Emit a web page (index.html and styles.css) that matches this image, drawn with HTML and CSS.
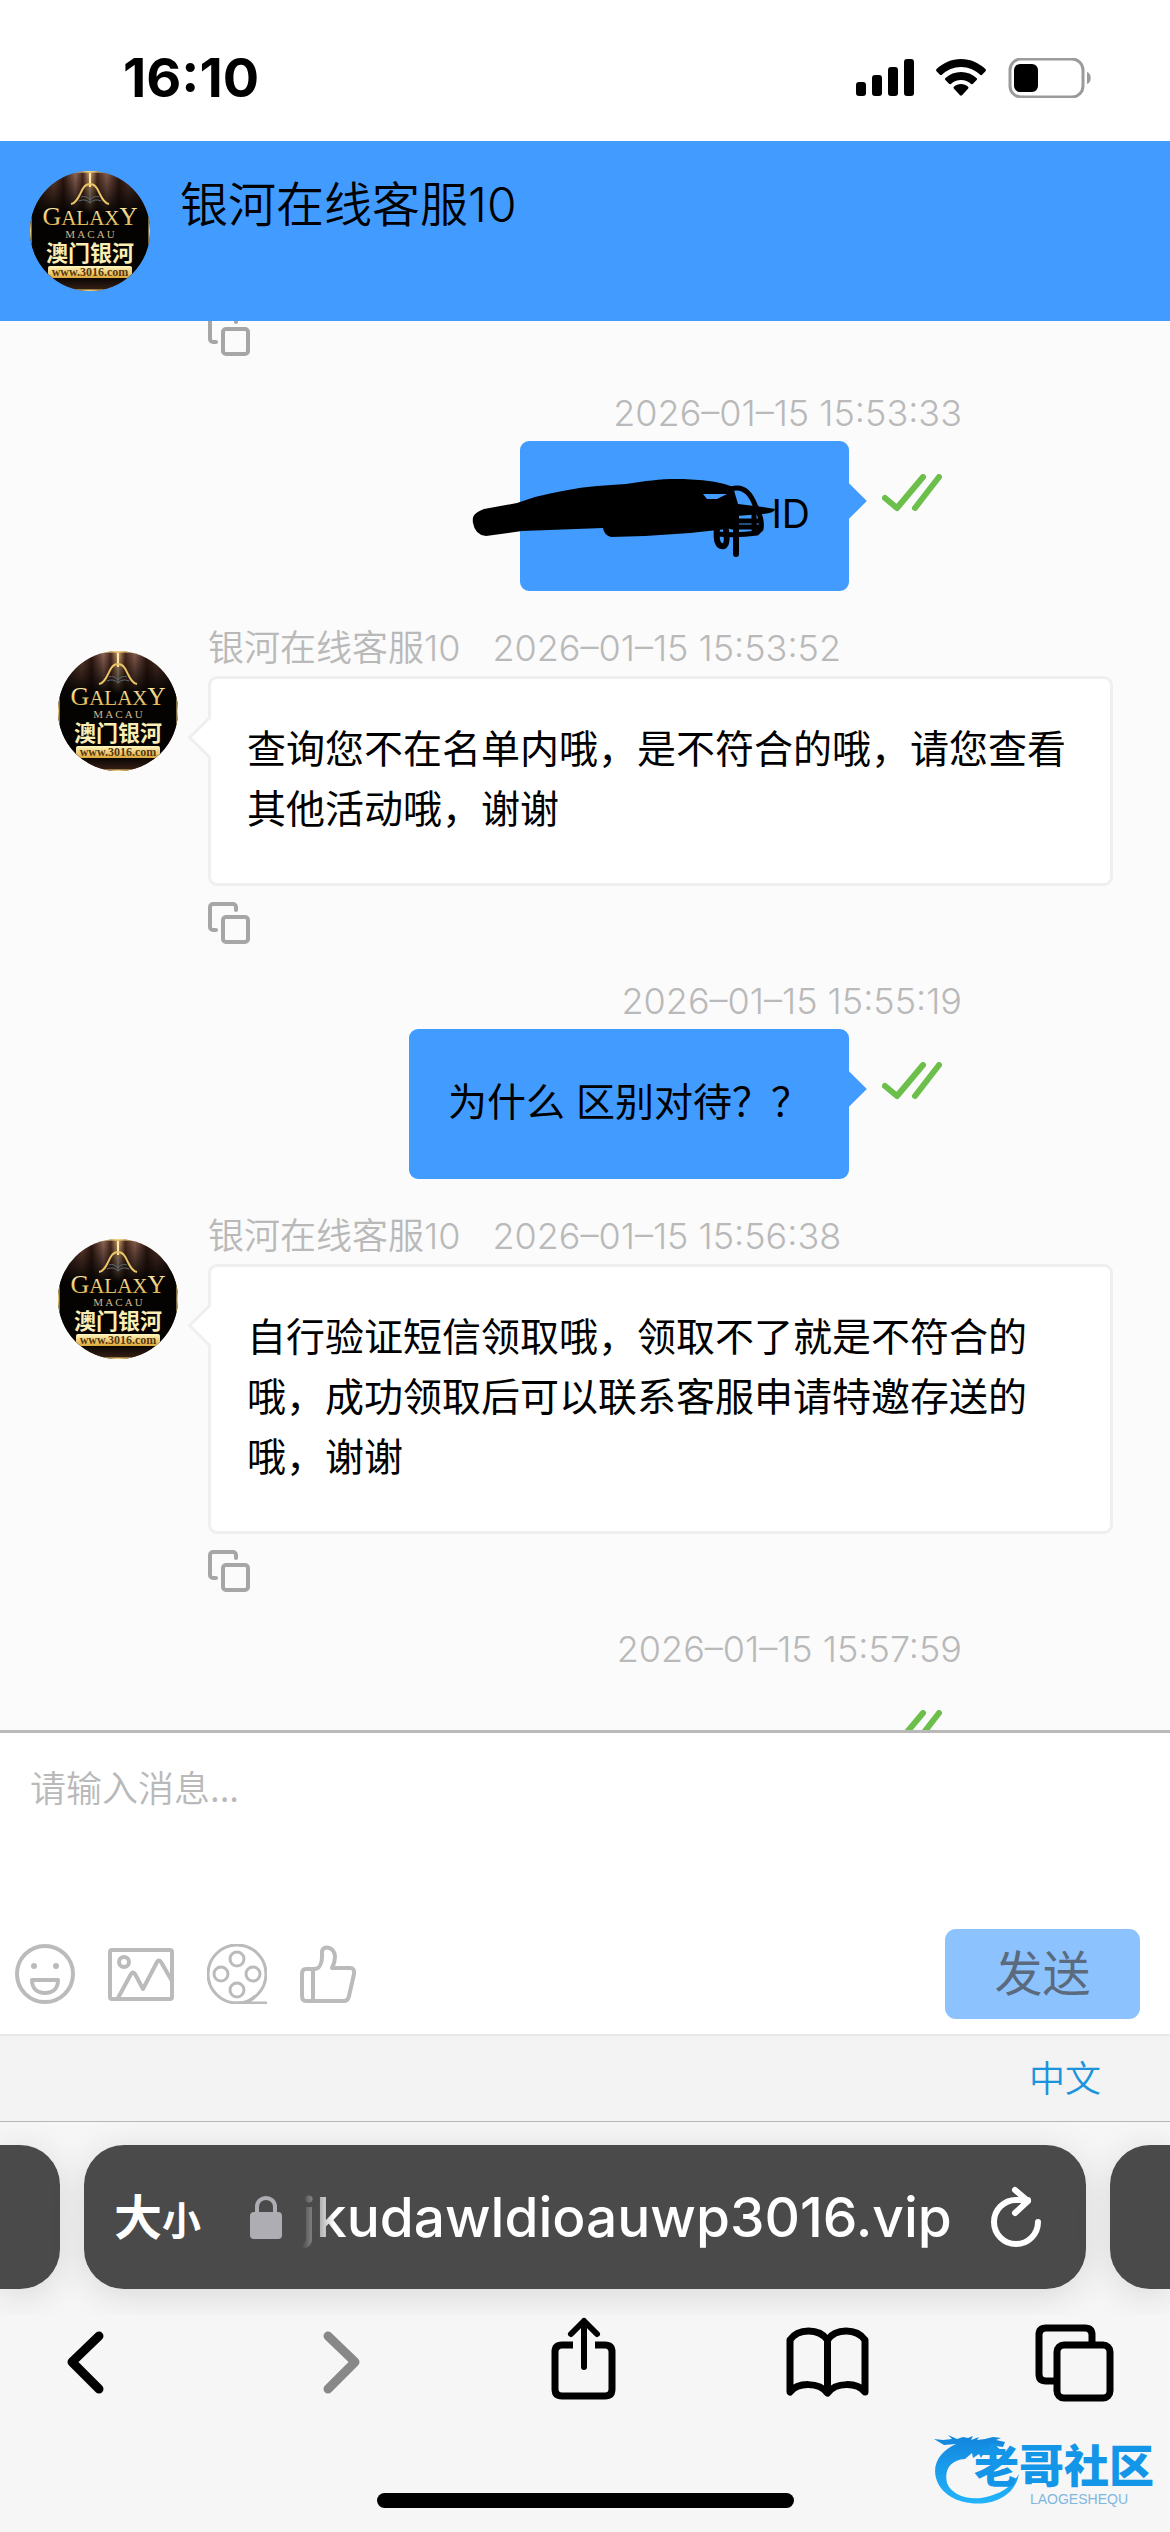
FILE: index.html
```html
<!DOCTYPE html>
<html lang="zh-CN">
<head>
  <meta charset="UTF-8" />
  <meta name="viewport" content="width=device-width, initial-scale=1.0" />
  <title>银河在线客服10</title>
  <link rel="stylesheet" href="styles.css">
</head>
<body>

<!-- Shared shapes -->
<svg class="defs" aria-hidden="true">
  <defs>
    <linearGradient id="curtain" x1="0" x2="1" y1="0" y2="0">
      <stop offset="0" stop-color="#1a0b06" />
      <stop offset="0.2" stop-color="#6b4434" />
      <stop offset="0.28" stop-color="#2f1710" />
      <stop offset="0.38" stop-color="#94695a" />
      <stop offset="0.44" stop-color="#4a281c" />
      <stop offset="0.5" stop-color="#d8a878" />
      <stop offset="0.56" stop-color="#4a281c" />
      <stop offset="0.64" stop-color="#8a6050" />
      <stop offset="0.74" stop-color="#2f1710" />
      <stop offset="0.82" stop-color="#55342a" />
      <stop offset="1" stop-color="#1a0b06" />
    </linearGradient>
    <linearGradient id="shade" x1="0" x2="0" y1="0" y2="1">
      <stop offset="0" stop-color="#050302" stop-opacity="0" />
      <stop offset="0.36" stop-color="#050302" />
      <stop offset="0.88" stop-color="#050302" />
      <stop offset="1" stop-color="#3a2216" />
    </linearGradient>
    <linearGradient id="gold" x1="0" x2="0" y1="0" y2="1">
      <stop offset="0" stop-color="#fff6c0" />
      <stop offset="1" stop-color="#dca93c" />
    </linearGradient>
    <clipPath id="round"><circle cx="60" cy="60" r="60" /></clipPath>
    <symbol id="galaxy" viewBox="0 0 120 120">
      <g clip-path="url(#round)">
        <rect width="120" height="120" fill="url(#curtain)" />
        <rect width="120" height="120" fill="url(#shade)" />
        <path d="M0 40v40M120 40v40M40 0h40M40 120h40" stroke="#f3d57c" stroke-width="3" />
        <path d="M60 2v14" stroke="#ffe9a0" stroke-width="2" />
        <path d="M41 33c10-2 9-20 19-20s9 18 19 20" fill="none" stroke="#e9c566" stroke-width="2" />
        <path d="M49 30q6-3 11 2q5-5 11-2M51 26q5-2 9 3q4-5 9-3M60 32V18" fill="none" stroke="#5b6a73" stroke-width="1" />
        <text class="logo-big" x="60" y="54" text-anchor="middle"><tspan font-size="26">G</tspan><tspan font-size="21">ALAX</tspan><tspan font-size="25">Y</tspan></text>
        <text class="logo-mid" x="60" y="67" text-anchor="middle">M A C A U</text>
        <text class="logo-cn" x="60" y="90" text-anchor="middle">澳门银河</text>
        <rect x="18" y="95" width="84" height="12" rx="2" fill="url(#gold)" />
        <text class="logo-url" x="60" y="105" text-anchor="middle">www.3016.com</text>
      </g>
    </symbol>
    <symbol id="copy" viewBox="0 0 42 42">
      <path d="M8 28H5a3 3 0 0 1-3-3V5a3 3 0 0 1 3-3h20a3 3 0 0 1 3 3v3" />
      <rect x="15" y="15" width="25" height="25" rx="3" />
    </symbol>
    <symbol id="ticks" viewBox="0 0 60 40">
      <path d="M3 24l12 10L41 3M33 34L57 3" />
    </symbol>
  </defs>
</svg>

<div class="status-bar">
  <span class="clock">16:10</span>
  <div class="status-icons">
    <svg width="58" height="40" viewBox="0 0 58 40">
      <rect x="0" y="24" width="10" height="14" rx="3" />
      <rect x="16" y="17" width="10" height="21" rx="3" />
      <rect x="32" y="9" width="10" height="29" rx="3" />
      <rect x="48" y="1" width="10" height="37" rx="3" />
    </svg>
    <svg width="50" height="40" viewBox="0 0 50 40">
      <path d="M25 1C15.500 1 7 5 .6 11c-.7.6-.7 1.500-.1 2.200l3.400 3.500c.6.600 1.400.600 2 .100C11 12 17.700 9 25 9s14 3 19.100 7.800c.6.500 1.400.500 2-.100l3.400-3.500c.6-.700.6-1.600-.1-2.200C43 5 34.500 1 25 1z" />
      <path d="M25 14c-6 0-11.400 2.300-15.500 6-.700.600-.700 1.500-.100 2.100l3.600 3.700c.5.500 1.300.600 1.900.100C17.600 23.500 21.100 22 25 22s7.400 1.500 10.100 3.900c.6.500 1.400.400 1.900-.100l3.600-3.700c.6-.600.6-1.500-.1-2.100C36.400 16.300 31 14 25 14z" />
      <path d="M25 26c-2.700 0-5.100 1-6.900 2.600-.7.600-.7 1.500-.1 2.200l6 6.400c.6.600 1.400.600 2 0l6-6.400c.6-.7.6-1.600-.1-2.200C30.100 27 27.700 26 25 26z" />
    </svg>
    <svg width="84" height="40" viewBox="0 0 84 40">
      <rect x="2" y="1" width="73" height="38" rx="11" fill="none" stroke="#9b9b9b" stroke-width="3" />
      <rect x="6" y="6" width="24" height="28" rx="6" />
      <path d="M79 14c5 1 5 11 0 12z" fill="#9b9b9b" />
    </svg>
  </div>
</div>

<header class="chat-header">
  <svg class="avatar"><use href="#galaxy" /></svg>
  <h1>银河在线客服10</h1>
</header>

<main class="chat">
  <div class="messages">
    <div class="msg">
      <div class="side"></div>
      <div class="body">
        <button class="copy" aria-label="复制"><svg><use href="#copy" /></svg></button>
      </div>
    </div>

    <div class="msg mine">
      <div class="meta">2026–01–15 15:53:33</div>
      <div class="line">
        <div class="bubble">
          <span class="hidden-word"></span>ID
          <svg class="scribble" viewBox="0 -4 310 84">
            <path d="M3 43C2 36 4 33 14 29L47 23L65 17C85 12 105 8 127 6L156 4C175 1 190-1 206-1C225-1 250 1 263 7L268 24L293 27L305 29Q305 33 293 34L266 36V48L220 53L175 56L141 57Q134 55 133 48L52 51L16 56Q5 55 3 43z" />
            <path d="M261 9q16-5 24 16q8 14 6 24l-4 4q-20 3-40 1M262 41h28M262 47h26M284 30v20" class="pen" />
            <path d="M266 32v42M247 48q-2 20 7 18q4-2 2-16" class="pen thick" />
            <path d="M233 14h24l-10 5h-10z" fill="#429cff" />
          </svg>
        </div>
        <svg class="ticks"><use href="#ticks" /></svg>
      </div>
    </div>

    <div class="msg">
      <div class="side"><svg class="avatar"><use href="#galaxy" /></svg></div>
      <div class="body">
        <div class="meta"><span>银河在线客服10</span><span>2026–01–15 15:53:52</span></div>
        <div class="bubble">查询您不在名单内哦，是不符合的哦，请您查看其他活动哦，谢谢</div>
        <button class="copy" aria-label="复制"><svg><use href="#copy" /></svg></button>
      </div>
    </div>

    <div class="msg mine">
      <div class="meta">2026–01–15 15:55:19</div>
      <div class="line">
        <div class="bubble">为什么 区别对待？？</div>
        <svg class="ticks"><use href="#ticks" /></svg>
      </div>
    </div>

    <div class="msg">
      <div class="side"><svg class="avatar"><use href="#galaxy" /></svg></div>
      <div class="body">
        <div class="meta"><span>银河在线客服10</span><span>2026–01–15 15:56:38</span></div>
        <div class="bubble">自行验证短信领取哦，领取不了就是不符合的哦，成功领取后可以联系客服申请特邀存送的哦，谢谢</div>
        <button class="copy" aria-label="复制"><svg><use href="#copy" /></svg></button>
      </div>
    </div>

    <div class="msg mine">
      <div class="meta">2026–01–15 15:57:59</div>
      <div class="line">
        <svg class="ticks"><use href="#ticks" /></svg>
      </div>
    </div>
  </div>
</main>

<form class="composer">
  <textarea aria-label="消息" placeholder="请输入消息..."></textarea>
  <div class="tools">
    <button type="button" aria-label="表情">
      <svg width="60" height="60" viewBox="0 0 60 60">
        <circle cx="30" cy="30" r="28" />
        <circle cx="19" cy="22" r="3" class="dot" /><circle cx="41" cy="22" r="3" class="dot" />
        <path d="M17 36h26c0 8-5 13-13 13s-13-5-13-13z" />
      </svg>
    </button>
    <button type="button" aria-label="图片">
      <svg width="66" height="60" viewBox="0 0 66 60">
        <rect x="2" y="6" width="62" height="49" rx="2" />
        <circle cx="16" cy="18" r="5" />
        <path d="M10 54l13-24q2-3 4 0l8 15L49 18q2-3 4 0l11 19" />
      </svg>
    </button>
    <button type="button" aria-label="视频">
      <svg class="thin" width="60" height="60" viewBox="0 0 60 60">
        <circle cx="30" cy="30" r="29" />
        <circle cx="30" cy="15" r="7" /><circle cx="14" cy="30" r="7" />
        <circle cx="46" cy="30" r="7" /><circle cx="30" cy="46" r="7" />
        <path d="M30 59h30M34 59q9-1 14-7" />
      </svg>
    </button>
    <button type="button" aria-label="点赞">
      <svg width="57" height="60" viewBox="0 0 57 60">
        <path d="M6 25h8c5 0 8-5 8-12V8c0-7 13-6 13 5 0 5-1 7-3 11h18q5 0 4 6l-5 22q-1 5-5 5H6q-4 0-4-5V30q0-5 4-5zM13 25v32" />
      </svg>
    </button>
    <button class="send" type="submit" disabled>发送</button>
  </div>
</form>

<div class="lang-bar"><a href="#">中文</a></div>

<footer class="browser">
  <div class="tabs">
    <span class="tab prev"></span>
    <div class="tab current">
      <button class="text-size" aria-label="大小">大<small>小</small></button>
      <svg class="lock" width="32" height="46" viewBox="0 0 32 46">
        <path d="M7 20v-7c0-12 18-12 18 0v7" fill="none" stroke="#aeadb3" stroke-width="4" />
        <rect y="18" width="32" height="27" rx="4" fill="#aeadb3" />
      </svg>
      <span class="url">jkudawldioauwp3016.vip</span>
      <button class="reload" aria-label="刷新">
        <svg width="52" height="62" viewBox="0 0 52 62">
          <path d="M48 36a22 22 0 1 1-22-22h12M25 4l13 11L25 27" />
        </svg>
      </button>
    </div>
    <span class="tab next"></span>
  </div>

  <nav class="nav">
    <button aria-label="后退"><svg viewBox="0 0 84 90"><path d="M56 21L29 47l27 27" stroke-width="9" /></svg></button>
    <button aria-label="前进" disabled><svg viewBox="0 0 84 90"><path d="M38 21l27 26-27 27" stroke-width="9" /></svg></button>
    <button aria-label="分享"><svg viewBox="0 0 84 90"><path d="M35 30H24q-7 0-7 7v37q0 7 7 7h43q7 0 7-7V37q0-7-7-7H57" stroke-linecap="butt" /><path d="M46 6v46M33 19L46 6l13 13" stroke-width="6" /></svg></button>
    <button aria-label="书签"><svg viewBox="0 0 84 90"><path d="M5 77V25c8-12 29-12 37.500 0c8-12 29-12 37.500 0v52c-8-10-29-10-37.500 1C34 67 13 67 5 77zM42.500 25v52" /></svg></button>
    <button aria-label="标签页"><svg viewBox="0 0 84 90"><path d="M24 66H14q-7 0-7-7V20q0-7 7-7h39q7 0 7 7v10" stroke-linecap="butt" /><rect x="25" y="30" width="53" height="53" rx="7" /></svg></button>
  </nav>

  <div class="home-bar"></div>

  <div class="watermark">
    <svg width="92" height="70" viewBox="0 0 92 70">
      <defs>
        <linearGradient id="dragon" x1="0" x2="0" y1="0" y2="1">
          <stop offset="0" stop-color="#1285dc" />
          <stop offset="1" stop-color="#22b4fb" />
        </linearGradient>
      </defs>
      <path fill="url(#dragon)" d="M0 5l9 1 9-1-4-4 9 4 6-2 5 1 5-2-2 4 8-3-2 3 8-1 8-2 8 1-5 2 9 2-2 5-7-1 6 5-10-1-8 3-3 5-2-4-6 4-1-5-7 6C16 26 10 36 13 49c5 13 24 19 43 13 15-4 23-12 29-22-3 15-14 26-33 29C28 72 7 62 2 44-2 29 7 17 22 10L10 11z" />
    </svg>
    <div class="mark-text"><b>老哥社区</b><small>LAOGESHEQU</small></div>
  </div>
</footer>

</body>
</html>
```

FILE: styles.css
```css
* {
  box-sizing: border-box;
}

body {
  margin: 0;
  height: 100vh;
  display: flex;
  flex-direction: column;
  overflow: hidden;
  font-family: Inter, "Noto Sans CJK SC", sans-serif;
  font-size: 39px;
  line-height: 60px;
  color: #000;
  background: #fff;
}

button {
  padding: 0;
  border: 0;
  background: none;
  font: inherit;
  color: inherit;
  cursor: pointer;
}

svg {
  display: block;
  flex: none;
}

.defs {
  position: absolute;
  width: 0;
  height: 0;
}

/* Status bar */
.status-bar {
  flex: none;
  display: flex;
  justify-content: space-between;
  align-items: center;
  padding: 48px 78px 33px 123px;
}

.clock {
  font-size: 54px;
  font-weight: 700;
}

.status-icons {
  display: flex;
  gap: 22px;
}

/* Header */
.chat-header {
  flex: none;
  display: flex;
  gap: 30px;
  padding: 30px;
  background: #429cff;
}

.chat-header h1 {
  margin: 0;
  font-size: 48px;
  font-weight: 350;
  line-height: 68px;
}

.avatar {
  width: 120px;
  height: 120px;
}

.logo-big {
  font-family: "Liberation Serif", serif;
  fill: url(#gold);
}

.logo-mid {
  font-family: "Liberation Serif", serif;
  font-size: 11px;
  fill: #cdb88a;
}

.logo-cn {
  font-family: "Noto Sans CJK SC", sans-serif;
  font-size: 22px;
  font-weight: 700;
  fill: #fbeeb4;
}

.logo-url {
  font-family: "Liberation Serif", serif;
  font-size: 12px;
  font-weight: 700;
  fill: #5a3608;
}

/* Messages */
.chat {
  flex: 1;
  min-height: 0;
  overflow: hidden;
  background: #fbfbfb;
}

.messages {
  display: flex;
  flex-direction: column;
  gap: 31px;
  margin-top: -23px;
}

.msg {
  display: flex;
  gap: 30px;
  padding: 0 57px 0 58px;
}

.side {
  width: 120px;
  padding-top: 29px;
}

.body {
  flex: 1;
}

.meta {
  display: flex;
  gap: 32px;
  padding-bottom: 2px;
  font-size: 36px;
  font-weight: 350;
  line-height: 52px;
  color: #b9b9b9;
}

.bubble {
  position: relative;
  padding: 40px 36px 44px;
  background: #fff;
  border: 3px solid #efefef;
  border-radius: 9px;
}

.bubble::before {
  content: "";
  position: absolute;
  top: 43px;
  left: -17px;
  width: 28px;
  height: 28px;
  background: #fff;
  border: solid #efefef;
  border-width: 0 0 3px 3px;
  transform: rotate(45deg);
}

.copy {
  display: block;
  margin-top: 16px;
}

.copy svg {
  width: 42px;
  height: 42px;
  fill: none;
  stroke: #a6a6a6;
  stroke-width: 4;
  stroke-linecap: round;
}

.mine {
  flex-direction: column;
  align-items: flex-end;
  gap: 0;
  padding-right: 208px;
}

.line {
  display: flex;
  align-items: flex-start;
  gap: 33px;
  padding-right: 20px;
}

.mine .bubble {
  background: #429cff;
  border-color: #429cff;
}

.mine .bubble::before {
  left: auto;
  right: -15px;
  background: #429cff;
  border: 0;
}

.ticks {
  width: 60px;
  height: 40px;
  margin-top: 33px;
  fill: none;
  stroke: #6cbf4b;
  stroke-width: 6;
  stroke-linecap: round;
  stroke-linejoin: round;
}

.hidden-word {
  display: inline-block;
  width: 212px;
}

.scribble {
  position: absolute;
  left: -53px;
  top: 32px;
  width: 310px;
  height: 84px;
}

.pen {
  fill: none;
  stroke: #000;
  stroke-width: 5;
  stroke-linecap: round;
}

.thick {
  stroke-width: 6;
}

/* Composer */
.composer {
  flex: none;
  margin: 0;
  border-top: 3px solid #b9b9b9;
  border-bottom: 2px solid #e8e8e8;
}

.composer textarea {
  display: block;
  width: 100%;
  height: 196px;
  padding: 26px 30px;
  border: 0;
  outline: 0;
  resize: none;
  background: none;
  font: 350 36px/54px "Noto Sans CJK SC", sans-serif;
}

.composer textarea::placeholder {
  color: #b9b9b9;
}

.tools {
  display: flex;
  align-items: center;
  gap: 33px;
  padding: 0 30px 15px 15px;
}

.tools svg {
  fill: none;
  stroke: #bbb;
  stroke-width: 4;
  stroke-linejoin: round;
}

.tools .thin {
  stroke-width: 3;
}

.tools .dot {
  fill: #bbb;
  stroke: none;
}

.send {
  width: 195px;
  height: 90px;
  margin-left: auto;
  border-radius: 11px;
  background: #8cc3ff;
  color: #5b6a7c;
  font-size: 48px;
}

/* Language */
.lang-bar {
  flex: none;
  display: flex;
  justify-content: flex-end;
  padding: 16px 69px 15px;
  background: #f3f3f3;
  font-size: 36px;
  font-weight: 350;
  line-height: 54px;
}

.lang-bar a {
  color: #1b94dc;
  text-decoration: none;
}

/* Browser bar */
.browser {
  flex: none;
  position: relative;
  padding-bottom: 24px;
  border-top: 1px solid #b3b7b7;
  background: #f6f6f6;
}

.tabs {
  display: flex;
  gap: 24px;
  padding: 23px 0 26px;
  overflow: hidden;
}

.tab {
  height: 144px;
  background: #4a4a4a;
  box-shadow: 0 6px 36px rgba(0, 0, 0, 0.12);
}

.prev,
.next {
  width: 60px;
}

.prev {
  border-radius: 0 40px 40px 0;
}

.next {
  border-radius: 40px 0 0 40px;
}

.current {
  flex: 1;
  min-width: 0;
  display: flex;
  align-items: center;
  padding: 0 44px 0 30px;
  border-radius: 40px;
  color: #fff;
}

.text-size {
  padding-top: 4px;
  font-size: 48px;
  font-weight: 700;
}

.text-size small {
  font-size: 39px;
}

.lock {
  margin: 0 20px 0 49px;
}

.url {
  flex: 1;
  min-width: 0;
  overflow: hidden;
  white-space: nowrap;
  font-size: 55px;
  font-weight: 500;
  line-height: 80px;
  -webkit-mask-image: linear-gradient(to right, transparent, #000 32px);
  mask-image: linear-gradient(to right, transparent, #000 32px);
}

.reload svg {
  fill: none;
  stroke: #fff;
  stroke-width: 6;
  stroke-linecap: round;
  stroke-linejoin: round;
}

.nav {
  display: flex;
  justify-content: space-between;
  padding: 0 54px 0 43px;
}

.nav svg {
  width: 84px;
  height: 90px;
  fill: none;
  stroke: #000;
  stroke-width: 7;
  stroke-linecap: round;
  stroke-linejoin: round;
}

.nav button:disabled svg {
  stroke: #888;
}

.home-bar {
  width: 417px;
  height: 15px;
  margin: 88px auto 0;
  border-radius: 8px;
  background: #000;
}

.watermark {
  position: absolute;
  right: 16px;
  bottom: 26px;
  display: flex;
  color: #1496e8;
}

.mark-text {
  display: flex;
  flex-direction: column;
  align-items: center;
  margin: 8px 0 0 -52px;
}

.mark-text b {
  font-size: 45px;
  font-weight: 900;
  line-height: 50px;
}

.mark-text small {
  padding-left: 30px;
  font: 14px/14px "Liberation Sans", sans-serif;
  color: #7fb6e0;
}
```
